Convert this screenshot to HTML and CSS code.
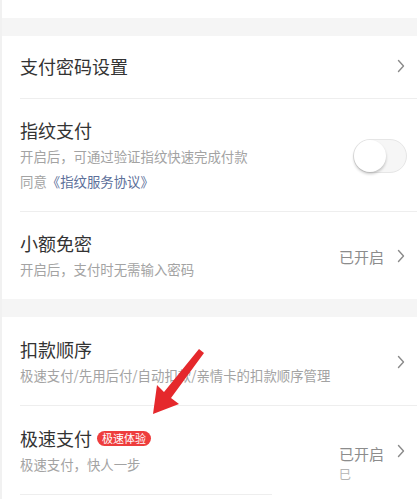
FILE: index.html
```html
<!DOCTYPE html>
<html lang="zh-CN">
<head>
<meta charset="utf-8">
<link rel="stylesheet" href="styles.css">
</head>
<body>
<div class="page">
  <div class="top"></div>
  <div class="band"></div>
  <div class="group">
    <div class="row row-single">
      <div class="main"><div class="title">支付密码设置</div></div>
      <div class="side"><svg class="chev" viewBox="0 0 8 14"><path d="M1.5 1.5 L6.5 7 L1.5 12.5"/></svg></div>
    </div>
    <div class="divider"></div>
    <div class="row">
      <div class="main">
        <div class="title">指纹支付</div>
        <div class="sub">开启后，可通过验证指纹快速完成付款</div>
        <div class="sub">同意<span class="link">《指纹服务协议》</span></div>
      </div>
      <div class="side"><div class="toggle"><div class="knob"></div></div></div>
    </div>
    <div class="divider"></div>
    <div class="row">
      <div class="main">
        <div class="title">小额免密</div>
        <div class="sub">开启后，支付时无需输入密码</div>
      </div>
      <div class="side"><span class="state">已开启</span><svg class="chev" viewBox="0 0 8 14"><path d="M1.5 1.5 L6.5 7 L1.5 12.5"/></svg></div>
    </div>
  </div>
  <div class="band"></div>
  <div class="group">
    <div class="row row-low">
      <div class="main">
        <div class="title">扣款顺序</div>
        <div class="sub">极速支付/先用后付/自动扣款/亲情卡的扣款顺序管理</div>
      </div>
      <div class="side"><svg class="chev" viewBox="0 0 8 14"><path d="M1.5 1.5 L6.5 7 L1.5 12.5"/></svg></div>
    </div>
    <div class="divider"></div>
    <div class="row row-low">
      <div class="main">
        <div class="title">极速支付<span class="badge">极速体验</span></div>
        <div class="sub">极速支付，快人一步</div>
      </div>
      <div class="side"><div class="state state-wrap"><span>已开启</span><span class="frag">巳</span></div><svg class="chev" viewBox="0 0 8 14"><path d="M1.5 1.5 L6.5 7 L1.5 12.5"/></svg></div>
    </div>
    <div class="divider divider-short"></div>
  </div>
  <svg class="arrow" viewBox="0 0 417 499" width="417" height="499">
    <polygon points="153,414 157,385 164,392 199,349 204,353 171,398 179,404"/>
  </svg>
</div>
</body>
</html>
```

FILE: styles.css
```css
html, body {
  margin: 0;
  padding: 0;
  background: #ffffff;
}
body {
  font-family: "Noto Sans CJK SC", "Noto Sans", sans-serif;
  color: #333333;
}
.page {
  position: relative;
  width: 417px;
  height: 499px;
  overflow: hidden;
  box-sizing: border-box;
  border-left: 2px solid #f1f1f1;
}
.top {
  height: 18px;
  background: #ffffff;
}
.band {
  height: 18px;
  background: #f5f5f5;
}
.group {
  background: #ffffff;
}
.row {
  display: flex;
  align-items: center;
  justify-content: space-between;
  padding: 18px 10px 17px 18px;
}
.row-single {
  height: 62px;
  padding-top: 0;
  padding-bottom: 3px;
  box-sizing: border-box;
}
.row-low {
  padding-top: 19px;
}
.main {
  display: flex;
  flex-direction: column;
}
.title {
  font-size: 18px;
  line-height: 26px;
  color: #333333;
  display: flex;
  align-items: center;
}
.sub {
  font-size: 13.4px;
  line-height: 25px;
  color: #a3a3a3;
  margin-top: 1px;
}
.sub + .sub {
  margin-top: 0;
}
.link {
  color: #5c6f9a;
}
.side {
  display: flex;
  align-items: center;
  gap: 13px;
}
.state {
  font-size: 15px;
  color: #8c8c8c;
}
.state-wrap {
  display: flex;
  flex-direction: column;
  line-height: 20px;
  margin-top: 13px;
  margin-bottom: -13px;
}
.frag {
  font-size: 12px;
  color: #b4b4b4;
}
.chev {
  width: 8px;
  height: 14px;
  margin-right: 2px;
}
.chev path {
  fill: none;
  stroke: #8a8a8a;
  stroke-width: 1.4;
  stroke-linecap: round;
  stroke-linejoin: round;
}
.toggle {
  width: 54px;
  height: 34px;
  box-sizing: border-box;
  border-radius: 17px;
  background: #f6f6f6;
  border: 1px solid #e6e6e6;
  position: relative;
}
.knob {
  position: absolute;
  left: 0;
  top: 0;
  width: 32px;
  height: 32px;
  border-radius: 50%;
  background: #ffffff;
  box-shadow: 0 2px 3px rgba(0, 0, 0, 0.22);
}
.badge {
  margin-left: 5px;
  font-size: 11px;
  line-height: 15px;
  padding: 0 5px;
  border-radius: 8px;
  background: #ee3d3d;
  color: #ffffff;
}
.divider {
  height: 1px;
  background: #eeeeee;
  margin-left: 18px;
}
.divider-short {
  margin-right: 145px;
}
.arrow {
  position: absolute;
  left: -2px;
  top: 0;
  pointer-events: none;
}
.arrow polygon {
  fill: #e5282c;
}
```
